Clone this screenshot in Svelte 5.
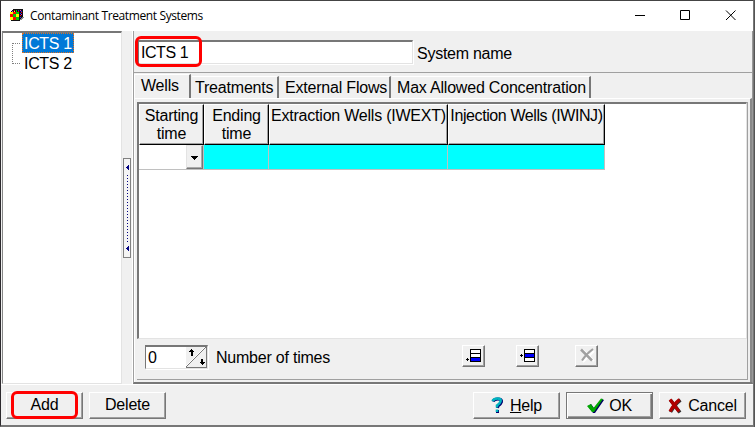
<script>
  const tabs = [
    { name: 'Treatments', width: 87 },
    { name: 'External Flows', width: 111 },
    { name: 'Max Allowed Concentration', width: 199 }
  ];
  const columns = [
    { title: 'Starting time', width: 65 },
    { title: 'Ending time', width: 65 },
    { title: 'Extraction Wells (IWEXT)', width: 179 },
    { title: 'Injection Wells (IWINJ)', width: 157 }
  ];
  const cube = [
    '...kkkkkkkkkk..',
    '..kkrkgkbkmkk..',
    '.kmkykgkrkkbk..',
    'yyyrrrgggkkrk..',
    'yyyrrrgggkbkk..',
    'rrrgggyyykkmk..',
    'rrrgggyyykrkk..',
    'rrrgggyyykkkk..',
    'yyyrrrgggkbkss.',
    'yyyrrrgggkkss..',
    'yyyrrrgggkss...',
    '.kkkkkkkkk.....'
  ];
  const ink = { k: '#111', r: '#f00', g: '#00d000', y: '#ff0', b: '#2424ff', m: '#e020e0', s: '#888' };
  const pixels = cube.flatMap((row, y) => [...row].map((c, x) => ({ x, y, c })).filter((p) => p.c !== '.'));
</script>

<div class="window">
  <header>
    <svg class="app-icon" width="15" height="12" shape-rendering="crispEdges">
      {#each pixels as p}<rect x={p.x} y={p.y} width="1" height="1" fill={ink[p.c]} />{/each}
    </svg>
    <span class="title">Contaminant Treatment Systems</span>
    <svg class="controls" width="101" height="12" fill="none" stroke="#000">
      <path d="M0 5.500h10M45.500 .5h9v9h-9zM91 .5l9.500 9.500M100.500 .5L91 10" />
    </svg>
  </header>

  <main>
    <aside class="tree">
      <svg class="branches" width="20" height="40" fill="none" stroke="#808080" stroke-dasharray="1 1" shape-rendering="crispEdges">
        <path d="M9.500 11v21M10 11.500h8M10 31.500h8" />
      </svg>
      <div class="nodes"><span class="selected">ICTS 1</span><span>ICTS 2</span></div>
    </aside>

    <div class="splitter">
      <div class="grip">
        <svg width="6" height="98" shape-rendering="crispEdges">
          <path d="M5 6v5L2 8.500zM5 87v5L2 89.500z" fill="#000080" />
          <path d="M3.500 16v67" stroke="#000080" stroke-dasharray="1 2" />
        </svg>
      </div>
    </div>

    <section class="details">
      <div class="name-row">
        <div class="field name">ICTS 1<i class="ring name-ring"></i></div>
        <span>System name</span>
      </div>
      <div class="tabs">
        <div class="tab active">Wells</div>
        {#each tabs as tab}<div class="tab" style:width="{tab.width}px">{tab.name}</div>{/each}
      </div>
      <div class="sheet">
        <div class="sheet-inner">
          <div class="grid">
            <div class="line">
              {#each columns as col}<div class="head" style:width="{col.width}px">{col.title}</div>{/each}
            </div>
            <div class="line">
              {#each columns as col, i}
                <div class="cell" class:edit={i === 0} style:width="{col.width}px">
                  {#if i === 0}<button class="drop" aria-label="Choose starting time"><svg width="9" height="5" shape-rendering="crispEdges"><path d="M1 1h7v1H1zM2 2h5v1H2zM3 3h3v1H3zM4 4h1v1H4z" /></svg></button>{/if}
                </div>
              {/each}
            </div>
          </div>
          <div class="row-tools">
            <div class="field count">
              <span>0</span>
              <svg width="21" height="21">
                <path d="M0 0h21v21H0z" fill="#f0f0f0" />
                <path d="M0 20.500h21M20.500 0v21M0 20L20 0" stroke="#777" fill="none" />
                <path d="M0 19L19 0" stroke="#fff" fill="none" />
                <g shape-rendering="crispEdges"><path d="M5 2h1v1h1v1h1v1H7v4H5V5H3V4h1V3h1zM15 12h2v3h2v1h-1v1h-1v1h-1v-1h-1v-1h-1v-1h1z" /></g>
              </svg>
            </div>
            <span class="count-label">Number of times</span>
            <button class="tool" aria-label="Add row">
              <svg width="16" height="15" shape-rendering="crispEdges"><path d="M4 1h11v13H4z" /><path d="M5 2h9v3H5zM5 6h9v3H5z" fill="#fff" /><path d="M5 10h9v3H5z" fill="#00f" /><path d="M0 11h3v1H0zM1 10h1v3H1z" /></svg>
            </button>
            <button class="tool insert" aria-label="Insert row">
              <svg width="16" height="15" shape-rendering="crispEdges"><path d="M4 1h11v13H4z" /><path d="M5 2h9v3H5zM5 10h9v3H5z" fill="#fff" /><path d="M5 6h9v3H5z" fill="#00f" /><path d="M0 7h3v1H0zM1 6h1v3H1z" /></svg>
            </button>
            <button class="tool remove" aria-label="Delete row">
              <svg width="17" height="15" fill="none"><path d="M4 2l11 11M15 3L4 14" stroke="#fff" stroke-width="2" /><path d="M2 1.500L13 12.500" stroke="#a0a0a0" stroke-width="2.500" /><path d="M14 1Q7 6 3 12.500" stroke="#a0a0a0" stroke-width="2" /></svg>
            </button>
          </div>
        </div>
      </div>
    </section>
  </main>

  <footer>
    <button class="push add"><span>Add</span><i class="ring add-ring"></i></button>
    <button class="push delete"><span>Delete</span></button>
    <button class="push help">
      <svg width="13" height="17" fill="none"><path d="M2 4.500Q3 2 7 2Q11 2 10.500 5Q10 7 7 9L6.500 11M6.500 13v3" stroke="#000070" stroke-width="3" /><path d="M1.500 4Q3 1.500 6.500 1.500Q10.500 1.500 9.500 4.500Q9 6.500 6 8.500V10.500M6 12.500v2.500" stroke="#00b4c0" stroke-width="2.600" /></svg>
      <span><u>H</u>elp</span>
    </button>
    <button class="push ok">
      <svg width="18" height="17"><path d="M1 9l3-2 3 4L15 2l2 1L8 16H6z" fill="#000060" /><path d="M0 9l4-2 2.500 4L14 1.500l2 .5L7 15H5z" fill="#00a800" /></svg>
      <span>OK</span>
    </button>
    <button class="push cancel">
      <svg width="14" height="16" fill="none"><path d="M2.500 2Q7 8 12 14.500M12.500 2Q7 6 2.500 14" stroke="#333" stroke-width="3.500" /><path d="M2 1.500Q6 7 11 13.500M11.500 1.500Q6 6 2 13.500" stroke="#b00000" stroke-width="3.200" /></svg>
      <span>Cancel</span>
    </button>
  </footer>
</div>

<style>
  :global(body) { background: #555; overflow: hidden; }
  * { box-sizing: border-box; }
  svg { display: block; flex: none; }
  button { padding: 0; color: inherit; font: inherit; letter-spacing: inherit; }
  .window {
    width: 754px; height: 427px; display: flex; flex-direction: column;
    border: 1px solid #444; border-left-color: #2d2a2e; border-right-color: #777; border-bottom: 2px solid #777;
    background: #f0f0f0; color: #000; font: 16px/19px "Liberation Sans", Arial, sans-serif; letter-spacing: -0.22px; white-space: nowrap;
  }
  header { height: 30px; flex: none; display: flex; align-items: center; padding: 0 17px 0 9px; background: #fff; }
  .app-icon { margin-top: -3px; }
  .title { margin-left: 5px; font: 12px/16px "Open Sans", "Noto Sans", sans-serif; letter-spacing: -0.38px; }
  .controls { margin-left: auto; }
  main { height: 353px; flex: none; display: flex; }
  .tree {
    position: relative; width: 120px; margin-left: 1px; padding: 1px 0 0 19px; background: #fff;
    border: 1px solid; border-color: #777 #e3e3e3 #e3e3e3 #888; border-top-width: 2px;
  }
  .branches { position: absolute; left: 0; top: -1px; }
  .nodes { display: flex; flex-direction: column; align-items: flex-start; margin-top: -1px; letter-spacing: -0.32px; }
  .nodes span { height: 20px; padding: 0 2px; line-height: 21px; }
  .nodes .selected { background: #0078d7; color: #fff; outline: 1px dotted #e07020; outline-offset: -1px; }
  .splitter { width: 11px; padding: 127px 0 0 1px; border-right: 1px solid #fff; }
  .grip { width: 8px; height: 100px; background: #f4f4f4; border: 1px solid #808080; }
  .details { flex: 1; display: flex; flex-direction: column; border-bottom: 2px solid #777; border-right: 1px solid #999; border-left: 1px solid #a0a0a0; }
  .name-row { height: 42px; display: flex; align-items: flex-start; gap: 4px; padding: 9px 0 0 4px; border-bottom: 1px solid #a0a0a0; }
  .name-row span { margin-top: 4px; letter-spacing: -0.26px; }
  .field { position: relative; background: #fff; border: 1px solid; border-color: #777 #e3e3e3 #e3e3e3 #777; box-shadow: 1px 1px #fff; }
  .name { width: 275px; height: 24px; border-top-width: 2px; padding: 1px 0 0 2px; letter-spacing: -0.45px; }
  .ring { position: absolute; border: 3px solid #f00; border-radius: 6px; }
  .name-ring { left: -4px; top: -6px; width: 67px; height: 31px; }
  .tabs { height: 25px; flex: none; display: flex; align-items: flex-end; letter-spacing: -0.2px; }
  .tab { height: 22px; margin-left: 1px; padding-left: 3px; line-height: 21px; border-top: 1px solid #fff; border-right: 2px solid #777; }
  .tab.active { width: 57px; height: 24px; margin: 0; padding-left: 6px; border-left: 1px solid #fff; line-height: 21px; }
  .tab:nth-child(n+3) { padding-left: 5px; }
  .sheet { flex: 1; display: flex; border: 1px solid #fff; border-right: 2px solid #888; padding: 3px 2px 2px; border-bottom: 0; }
  .sheet-inner { flex: 1; display: flex; flex-direction: column; border-right: 1px solid #a0a0a0; border-bottom: 1px solid #a0a0a0; }
  .grid { height: 237px; background: #fff; border: 2px solid #777; border-right: 1px solid #e3e3e3; border-bottom: 1px solid #e3e3e3; }
  .line { display: flex; }
  .head { height: 41px; padding-top: 2px; background: #f0f0f0; text-align: center; line-height: 18px; white-space: normal; border: 1px solid #000; border-top-color: #fff; border-left-color: #fff; box-shadow: inset -1px -1px #a0a0a0; }
  .head:nth-child(n+3) { white-space: nowrap; }
  .head:nth-child(4) { letter-spacing: -0.4px; }
  .cell { height: 25px; background: #0ff; border: solid #c0c0c0; border-width: 0 1px 1px 0; display: flex; justify-content: flex-end; }
  .edit { background: #fff; }
  .drop { width: 17px; height: 24px; display: grid; place-items: center; background: #f0f0f0; border: 1px solid; border-color: #e3e3e3 #777 #777 #e3e3e3; box-shadow: inset -1px -1px #aaa; }
  .row-tools { flex: 1; display: flex; align-items: flex-start; padding: 6px 0 0 8px; }
  .count { width: 63px; height: 24px; display: flex; justify-content: space-between; padding-left: 2px; border-top-width: 2px; }
  .count span { margin-top: 1px; }
  .count-label { margin: 3px 0 0 8px; width: 246px; }
  .tool { width: 23px; height: 22px; display: grid; place-items: start; padding: 2px 0 0 3px; background: #f0f0f0; border: 1px solid; border-color: #fff #777 #777 #fff; box-shadow: inset -1px -1px #a0a0a0; }
  .insert { margin-left: 31px; }
  .remove { margin-left: 36px; }
  footer { flex: 1; display: flex; align-items: flex-start; padding: 7px 0 0 5px; border-top: 1px solid #fff; }
  .push { position: relative; width: 87px; height: 27px; flex: none; display: flex; align-items: center; justify-content: center; background: #f0f0f0; border: 1px solid; border-color: #fff #777 #777 #fff; box-shadow: inset -1px -1px #a0a0a0; }
  .add { width: 77px; }
  .add span, .delete span { margin-bottom: 2px; }
  .add-ring { left: 4px; top: -2px; width: 67px; height: 28px; }
  .delete { width: 77px; margin-left: 6px; }
  .help { margin-left: 307px; gap: 6px; }
  .ok { margin-left: 6px; gap: 4px; border-color: #777; box-shadow: inset 1px 1px #fff, inset -1px -1px #777, inset -2px -2px #a0a0a0; }
  .cancel { margin-left: 6px; gap: 6px; }
</style>
